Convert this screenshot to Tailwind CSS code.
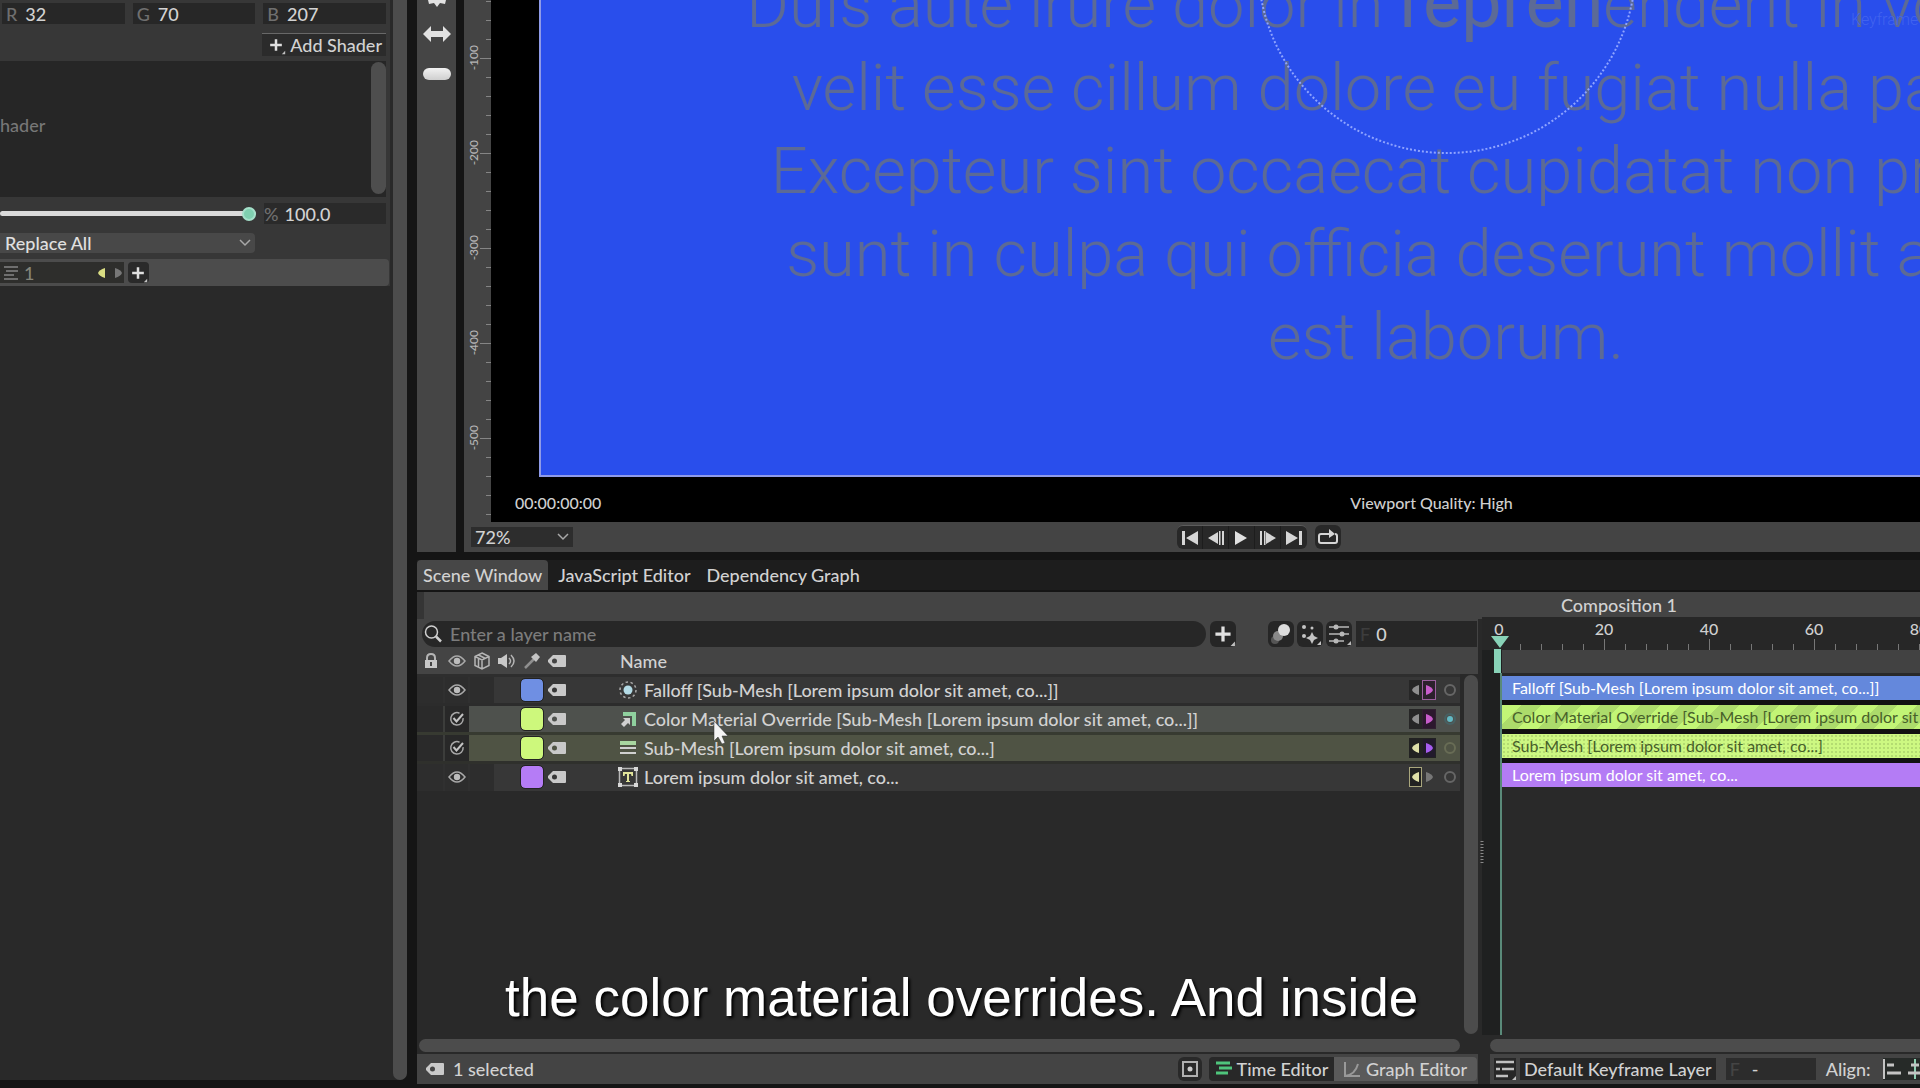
<!DOCTYPE html>
<html lang="en">
<head>
  <meta charset="UTF-8">
  <title>Scene Window - Composition 1</title>
  <script src="https://cdn.jsdelivr.net/npm/@tailwindcss/browser@4"></script>
</head>
<body class="h-screen flex overflow-hidden bg-[#151515] font-['Lato',sans-serif] font-medium text-lg leading-6 text-[#d2d2d2]">

  <!-- Shared icons -->
  <svg class="hidden">
    <symbol id="tag" viewBox="0 0 20 14"><path fill="#c9c9c9" fill-rule="evenodd" d="M6 1h12q1 0 1 1v10q0 1-1 1H6L1 8V6zM7.500 4.500a2.500 2.500 0 1 0 0 5a2.500 2.500 0 1 0 0-5z"/></symbol>
    <symbol id="eye" viewBox="0 0 18 14"><path fill="none" stroke="#a9a9a9" stroke-width="1.500" d="M1 7q8-10 16 0q-8 10-16 0z"/><circle cx="9" cy="7" r="3.200" fill="#bdbdbd"/></symbol>
    <symbol id="check" viewBox="0 0 16 16"><path fill="none" stroke="#a8a8a8" stroke-width="1.500" d="M10.500 2.200a6.200 6.200 0 1 0 3.600 5"/><path fill="none" stroke="#c4c4c4" stroke-width="2" d="M4.500 7l3 3.500L14 3"/></symbol>
    <symbol id="plus" viewBox="0 0 24 24"><path stroke="#e0e0e0" stroke-width="3" d="M12 5v14M5 12h14"/><path fill="#c0c0c0" d="M23 19v4h-4z"/></symbol>
    <symbol id="left" viewBox="0 0 8 10"><path fill="currentColor" d="M7 0v10Q1 8 0 5Q1 2 7 0z"/></symbol>
    <symbol id="right" viewBox="0 0 8 10"><path fill="currentColor" d="M1 0v10Q7 8 8 5Q7 2 1 0z"/></symbol>
    <symbol id="chevron" viewBox="0 0 12 8"><path fill="none" stroke="#a8a8a8" stroke-width="1.500" d="M1 1l5 5l5-5"/></symbol>
  </svg>

  <!-- Attribute panel -->
  <aside class="w-[407px] shrink-0 flex bg-[#292929] mb-2 rounded-br-lg">
    <div class="flex-1 mr-[3px]">
      <div class="bg-[#373737]">
        <div class="flex gap-2 pt-[3px] pr-1 pl-[2px]">
          <label class="flex-1 flex items-center gap-2 bg-[#272727] h-[21px] pl-1 text-[#6f6f6f]">R<input class="w-16 text-[#d2d2d2]" value="32"></label>
          <label class="flex-1 flex items-center gap-2 bg-[#272727] h-[21px] pl-1 text-[#6f6f6f]">G<input class="w-16 text-[#d2d2d2]" value="70"></label>
          <label class="flex-1 flex items-center gap-2 bg-[#272727] h-[21px] pl-1 text-[#6f6f6f]">B<input class="w-16 text-[#d2d2d2]" value="207"></label>
        </div>
        <div class="flex justify-end pt-[9px] pr-1 pb-[5px]">
          <button class="flex items-center gap-1 h-[23px] px-1 bg-[#2b2b2b] border-t border-[#686868]"><svg class="size-5"><use href="#plus"/></svg>Add Shader</button>
        </div>
        <div class="flex justify-between bg-[#262626] h-[136px] mr-1">
          <span class="pt-[52px] text-[#777]">hader</span>
          <div class="w-[15px] h-[132px] mt-px rounded-full bg-[#4e4e4e]"></div>
        </div>
        <div class="flex items-center gap-2 mt-[6px] pr-1">
          <input type="range" aria-label="Opacity" value="100" class="flex-1 min-w-0 h-[5px] rounded-full appearance-none bg-[#dadada] [&::-webkit-slider-thumb]:appearance-none [&::-webkit-slider-thumb]:size-[14px] [&::-webkit-slider-thumb]:rounded-full [&::-webkit-slider-thumb]:bg-[#7fd0b0] [&::-webkit-slider-thumb]:border-2 [&::-webkit-slider-thumb]:border-[#a5e0ca]">
          <label class="flex items-center gap-[6px] w-[122px] bg-[#2a2a2a] h-[21px] text-[#6f6f6f]">%<input class="w-20 text-[#d2d2d2]" value="100.0"></label>
        </div>
        <div class="relative w-[255px] h-5 mt-[9px]">
          <select aria-label="Blend" class="appearance-none block w-full h-5 leading-5 pl-[5px] bg-[#484848] rounded-r text-[#e0e0e0]"><option>Replace All</option></select>
          <svg class="absolute right-1 top-[6px] w-3 h-2"><use href="#chevron"/></svg>
        </div>
        <div class="flex items-center gap-1 h-[27px] mt-[6px] mr-px rounded-r bg-[#4c4c4c]">
          <div class="flex items-center w-[124px] h-[21px] pl-1 bg-[#2e2e2c] text-[#85857a]">
            <svg class="w-[14px] h-[14px] mr-[6px]" viewBox="0 0 14 14"><path stroke="#858585" stroke-width="1.500" d="M0 1h14M2 5h12M0 9h10M0 13h14"/></svg>
            1
            <svg class="w-2 h-[10px] ml-auto text-[#d9dd83]"><use href="#left"/></svg>
            <svg class="w-2 h-[10px] ml-2 mr-[2px] text-[#777]"><use href="#right"/></svg>
          </div>
          <button aria-label="Add" class="size-[21px] rounded bg-[#2a2a2a]"><svg class="size-5"><use href="#plus"/></svg></button>
        </div>
      </div>
    </div>
    <div class="w-[14px] bg-[#4c4c4c] rounded-b-lg"></div>
  </aside>

  <main class="flex-1 min-w-0 flex flex-col ml-[10px]">

    <div class="flex h-[552px] shrink-0">
      <!-- Tool strip -->
      <div class="w-[39px] shrink-0 mr-2 bg-[#454545] flex flex-col items-center">
        <svg class="w-5 h-2" viewBox="0 0 20 8"><path fill="#e2e2e2" d="M1 0h18l-1 4l-5-1l-3 4l-3-4l-5 1z"/></svg>
        <svg class="w-[30px] h-4 mt-[18px]" viewBox="0 0 30 16"><path fill="#e2e2e2" d="M1 8l8-8v5h12V0l8 8l-8 8v-5H9v5z"/></svg>
        <div class="w-7 h-3 mt-[26px] rounded-full bg-linear-to-b from-[#f2f2f2] to-[#cfcfcf]"></div>
      </div>

      <!-- Viewport -->
      <section class="flex-1 min-w-0 flex flex-col bg-[#444]">
        <div class="flex h-[522px]">
          <div class="relative w-[27px] shrink-0 pt-[10px] pl-[2px] overflow-hidden text-xs leading-4 text-[#b5b5b5]">
            <svg class="absolute inset-0 w-full h-full">
              <defs>
                <pattern id="minor" y="1" width="27" height="19" patternUnits="userSpaceOnUse"><path stroke="#858585" d="M22 .5h5"/></pattern>
                <pattern id="major" y="58" width="27" height="95" patternUnits="userSpaceOnUse"><path stroke="#858585" d="M16 .5h11"/></pattern>
              </defs>
              <rect width="27" height="522" fill="url(#minor)"/>
              <rect width="27" height="522" fill="url(#major)"/>
            </svg>
            <div class="h-[95px] flex items-center"><span class="[writing-mode:vertical-rl] rotate-180">-100</span></div>
            <div class="h-[95px] flex items-center"><span class="[writing-mode:vertical-rl] rotate-180">-200</span></div>
            <div class="h-[95px] flex items-center"><span class="[writing-mode:vertical-rl] rotate-180">-300</span></div>
            <div class="h-[95px] flex items-center"><span class="[writing-mode:vertical-rl] rotate-180">-400</span></div>
            <div class="h-[95px] flex items-center"><span class="[writing-mode:vertical-rl] rotate-180">-500</span></div>
          </div>
          <div class="flex-1 min-w-0 bg-black text-base text-[#cfcfcf] overflow-hidden">
            <div class="relative ml-12 h-[477px] w-[1812px] border-l-2 border-b-2 border-[#8f9be8] bg-[#294eec] flex flex-col justify-end pb-[96px] text-center whitespace-nowrap font-['Roboto',sans-serif] font-light text-[65px] leading-[83px] text-[#5c6a96]">
              <p>Duis aute irure dolor in <span class="font-normal text-[72px] leading-none">repreh</span>enderit in voluptate</p>
              <p>velit esse cillum dolore eu fugiat nulla pariatur.</p>
              <p>Excepteur sint occaecat cupidatat non proident,</p>
              <p>sunt in culpa qui officia deserunt mollit anim id</p>
              <p>est laborum.</p>
              <svg class="absolute left-0 top-0 w-full h-full"><circle cx="906" cy="-36" r="189" fill="none" stroke="#8fa4ff" stroke-width="2" stroke-dasharray="2 2"/></svg>
              <span class="absolute left-[1310px] top-2 text-base leading-6 text-[#4163ee]">Keyframe</span>
            </div>
            <div class="grid grid-cols-[auto_1fr] pl-6 pt-[14px]">
              <span>00:00:00:00</span>
              <span class="pl-[749px]">Viewport Quality: High</span>
            </div>
          </div>
        </div>
        <div class="flex-1 flex items-center pl-[7px]">
          <div class="relative w-[102px]">
            <select aria-label="Zoom" class="appearance-none block w-full h-5 leading-5 pl-1 bg-[#2d2d2d]"><option>72%</option></select>
            <svg class="absolute right-1 top-[6px] w-3 h-2"><use href="#chevron"/></svg>
          </div>
          <div class="flex ml-[604px] h-6 rounded-md bg-[#282828] divide-x divide-[#1d1d1d] border-t border-[#5c5c5c]">
            <button aria-label="First frame" class="w-[26px] pl-1"><svg class="w-[18px] h-4" viewBox="0 0 18 16"><path fill="#d6d6d6" d="M1 1h3v14H1zM17 1v14L5 8z"/></svg></button>
            <button aria-label="Previous frame" class="w-[26px] pl-1"><svg class="w-[18px] h-4" viewBox="0 0 18 16"><path fill="#d6d6d6" d="M11 2v12L1 8zM12 1h1.500v14H12zM15 1h2v14h-2z"/></svg></button>
            <button aria-label="Play" class="w-[26px] pl-1"><svg class="w-[18px] h-4" viewBox="0 0 18 16"><path fill="#e0e0e0" d="M2 1v14l12-7z"/></svg></button>
            <button aria-label="Next frame" class="w-[26px] pl-1"><svg class="w-[18px] h-4" viewBox="0 0 18 16"><path fill="#d6d6d6" d="M7 2v12l10-6zM1 1h2v14H1zM5 1h1.500v14H5z"/></svg></button>
            <button aria-label="Last frame" class="w-[26px] pl-1"><svg class="w-[18px] h-4" viewBox="0 0 18 16"><path fill="#d6d6d6" d="M1 1v14l12-7zM14 1h3v14h-3z"/></svg></button>
          </div>
          <button aria-label="Loop" class="ml-2 w-[26px] h-6 pl-[3px] rounded-md bg-[#282828]"><svg class="w-5 h-4" viewBox="0 0 20 16"><path fill="none" stroke="#d6d6d6" stroke-width="2" d="M7 5H3q-2 0-2 2v5q0 2 2 2h14q2 0 2-2V7q0-2-2-2M6 5h6"/><path fill="#d6d6d6" d="M11 0l6 5l-6 4z"/></svg></button>
        </div>
      </section>
    </div>

    <!-- Tabs -->
    <nav class="flex h-[30px] mt-2 mb-[2px] bg-[#1d1d1d] shrink-0">
      <button class="px-[6px] bg-[#474747] rounded-t-sm">Scene Window</button>
      <button class="px-[10px]">JavaScript Editor</button>
      <button class="px-[6px]">Dependency Graph</button>
    </nav>

    <div class="flex-1 flex min-h-0 mb-1">

      <!-- Layer list -->
      <section class="w-[1065px] shrink-0 flex flex-col bg-[#292929]">
        <div class="h-[27px] bg-[#444] border-l-[7px] border-[#353535]"></div>
        <div class="flex items-center h-[30px] bg-[#444] pl-[5px] mr-1">
          <label class="flex items-center gap-2 w-[784px] h-[26px] mr-1 pl-[2px] rounded-full bg-[#272727]">
            <svg class="size-[18px]" viewBox="0 0 18 18"><circle cx="7.500" cy="7" r="6" fill="none" stroke="#cfcfcf" stroke-width="1.500"/><path stroke="#cfcfcf" stroke-width="2.500" d="M12 11.500l5 5"/></svg>
            <input aria-label="Layer name" placeholder="Enter a layer name" class="flex-1 placeholder:text-[#7c7c7c]">
          </label>
          <button aria-label="New layer" class="size-[26px] rounded-md bg-[#262626]"><svg class="size-[26px]"><use href="#plus"/></svg></button>
          <button aria-label="Motion blur" class="ml-8 size-[26px] rounded-md bg-[#262626]"><svg class="size-[26px]" viewBox="0 0 26 26"><circle cx="7" cy="19" r="4" fill="#555"/><circle cx="10" cy="15" r="5" fill="#888"/><circle cx="16" cy="9" r="6" fill="#dcdcdc"/></svg></button>
          <button aria-label="Effects" class="ml-[3px] size-[26px] rounded-md bg-[#262626]"><svg class="size-[26px]" viewBox="0 0 26 26"><g fill="#c4c4c4"><circle cx="7" cy="6" r="2"/><circle cx="15" cy="7" r="1.500"/><circle cx="7" cy="15" r="2"/><path d="M15 11l2 4l4 2l-4 2l-2 4l-2-4l-4-2l4-2zM24 20v4h-4z"/></g></svg></button>
          <button aria-label="Filters" class="ml-[3px] size-[26px] rounded-md bg-[#262626]"><svg class="size-[26px]" viewBox="0 0 26 26"><path stroke="#b8b8b8" stroke-width="1.500" d="M3 6h20M3 13h20M3 20h15"/><g fill="#b8b8b8"><circle cx="10" cy="6" r="2.500"/><circle cx="16" cy="13" r="2.500"/><circle cx="10" cy="20" r="2.500"/><path d="M25 20v4h-4z"/></g></svg></button>
          <label class="flex items-center gap-[6px] flex-1 h-[26px] ml-1 mr-px pl-1 bg-[#272727] text-[#3d3d3d]">F<input class="w-20 text-[#d2d2d2]" value="0"></label>
        </div>

        <div class="flex-1 flex min-h-0 bg-[#292929]">
          <div class="flex-1 min-w-0">
            <table class="w-full table-fixed border-collapse">
              <colgroup><col class="w-[27px]"><col class="w-[25px]"><col class="w-[25px]"><col class="w-[25px]"><col class="w-[25px]"><col class="w-[25px]"><col class="w-[49px]"><col><col class="w-[51px]"></colgroup>
              <thead>
                <tr class="h-[26px] bg-[#444] text-left border-b-[3px] border-[#2e2e2e]">
                  <th aria-label="Lock"><svg class="w-[14px] h-4 mx-auto" viewBox="0 0 14 16"><path fill="none" stroke="#b5b5b5" stroke-width="2" d="M3 8V5q0-4 4-4t4 4v3"/><path fill="#c8c8c8" fill-rule="evenodd" d="M1 7h12v8H1zM6 9h2v4H6z"/></svg></th>
                  <th aria-label="Visible"><svg class="w-[18px] h-[14px] mx-auto"><use href="#eye"/></svg></th>
                  <th aria-label="3D"><svg class="size-[18px] mx-auto" viewBox="0 0 18 18"><path fill="none" stroke="#b5b5b5" stroke-width="1.500" d="M9 1l7 3.500v9L9 17l-7-3.500v-9zM2 4.500L9 8l7-3.500M9 8v9M5.500 3l7 3.500M5.500 6v9"/></svg></th>
                  <th aria-label="Audio"><svg class="w-[18px] h-4 mx-auto" viewBox="0 0 18 16"><path fill="#c8c8c8" d="M0 5h3l6-4v14l-6-4H0z"/><path fill="none" stroke="#b5b5b5" stroke-width="1.500" d="M11 5q3 3 0 6M13 2q6 6 0 12"/></svg></th>
                  <th aria-label="Colour"><svg class="size-4 mx-auto" viewBox="0 0 16 16"><path stroke="#8f8f8f" stroke-width="2.500" d="M1 15l9-9"/><path fill="#c4c4c4" d="M7 4l5-4l4 4l-4 5z"/></svg></th>
                  <th aria-label="Tag"><svg class="w-5 h-[14px] mx-auto"><use href="#tag"/></svg></th>
                  <th></th>
                  <th class="pl-[2px] font-medium leading-6">Name</th>
                  <th></th>
                </tr>
              </thead>
              <tbody>
                <tr class="h-[29px] bg-[#373737] border-b-[3px] border-[#2c2c2c]">
                  <td class="bg-[#2d2d2d] border-r-2 border-[#303030]"></td>
                  <td class="bg-[#2d2d2d] border-r-2 border-[#303030]"><svg class="w-[18px] h-[14px] mx-auto"><use href="#eye"/></svg></td>
                  <td class="bg-[#2d2d2d]"></td>
                  <td></td>
                  <td><div class="size-[22px] mx-auto rounded-sm bg-[#6f8fe3] outline outline-[#222]"></div></td>
                  <td><svg class="w-5 h-[14px] mx-auto"><use href="#tag"/></svg></td>
                  <td></td>
                  <td><div class="flex items-center gap-[6px] whitespace-nowrap"><svg class="size-5" viewBox="0 0 20 20"><circle cx="10" cy="10" r="8" fill="none" stroke="#aaa" stroke-width="1.500" stroke-dasharray="2.500 2.500"/><circle cx="10" cy="10" r="4.500" fill="#b4dbe6"/></svg>Falloff [Sub-Mesh [Lorem ipsum dolor sit amet, co...]]</div></td>
                  <td><div class="flex items-center"><span class="flex w-[13px] h-5 items-center justify-center bg-[#262626] text-[#8f8f8f]"><svg class="w-2 h-[10px]"><use href="#left"/></svg></span><span class="flex w-[14px] h-5 items-center justify-center border border-[#9a5f9d] bg-[#2c202c] text-[#c75ccb]"><svg class="w-2 h-[10px]"><use href="#right"/></svg></span><span class="size-3 ml-2 rounded-full border-2 border-[#666]"></span></div></td>
                </tr>
                <tr class="h-[29px] bg-[#4e514d] border-b-[3px] border-[#373a31]">
                  <td class="bg-[#2a2a2a] border-r-2 border-[#3c3d3b]"></td>
                  <td class="bg-[#282828]"><svg class="size-4 mx-auto"><use href="#check"/></svg></td>
                  <td></td>
                  <td></td>
                  <td><div class="size-[22px] mx-auto rounded-sm bg-[#cdf87c] outline outline-[#222]"></div></td>
                  <td><svg class="w-5 h-[14px] mx-auto"><use href="#tag"/></svg></td>
                  <td></td>
                  <td><div class="flex items-center gap-[6px] whitespace-nowrap"><svg class="size-5" viewBox="0 0 20 20"><path fill="#8fd09e" d="M5 3h13v14h-4V7H5z"/><path fill="#d0d0d0" d="M5 9h7v7l-2-2l-4 4l-3-3l4-4z"/></svg>Color Material Override [Sub-Mesh [Lorem ipsum dolor sit amet, co...]]</div></td>
                  <td><div class="flex items-center"><span class="flex w-[13px] h-5 items-center justify-center bg-[#262626] text-[#8f8f8f]"><svg class="w-2 h-[10px]"><use href="#left"/></svg></span><span class="flex w-[14px] h-5 items-center justify-center border border-[#302030] bg-[#2c182e] text-[#c75ccb]"><svg class="w-2 h-[10px]"><use href="#right"/></svg></span><span class="flex items-center justify-center size-3 ml-2 rounded-full border-2 border-[#476062]"><span class="size-[6px] rounded-full bg-[#62b9c4]"></span></span></div></td>
                </tr>
                <tr class="h-[29px] bg-[#4f5344] border-b-[3px] border-[#2f302c]">
                  <td class="bg-[#2a2a2a] border-r-2 border-[#3c3d3b]"></td>
                  <td class="bg-[#282828]"><svg class="size-4 mx-auto"><use href="#check"/></svg></td>
                  <td></td>
                  <td></td>
                  <td><div class="size-[22px] mx-auto rounded-sm bg-[#cdf87c] outline outline-[#222]"></div></td>
                  <td><svg class="w-5 h-[14px] mx-auto"><use href="#tag"/></svg></td>
                  <td></td>
                  <td><div class="flex items-center gap-[6px] whitespace-nowrap"><svg class="size-5" viewBox="0 0 20 20"><path fill="#a8d6a0" d="M2 3h16v4H2z"/><path fill="#d0d0d0" d="M2 9h16v2H2zM2 14h16v2H2z"/></svg>Sub-Mesh [Lorem ipsum dolor sit amet, co...]</div></td>
                  <td><div class="flex items-center"><span class="flex w-[13px] h-5 items-center justify-center bg-[#222] text-[#dfe0a8]"><svg class="w-2 h-[10px]"><use href="#left"/></svg></span><span class="flex w-[14px] h-5 items-center justify-center border border-[#222] bg-[#221a2c] text-[#a75df0]"><svg class="w-2 h-[10px]"><use href="#right"/></svg></span><span class="size-3 ml-2 rounded-full border-2 border-[#686c55]"></span></div></td>
                </tr>
                <tr class="h-[29px] bg-[#373737]">
                  <td class="bg-[#2d2d2d] border-r-2 border-[#303030]"></td>
                  <td class="bg-[#2d2d2d] border-r-2 border-[#303030]"><svg class="w-[18px] h-[14px] mx-auto"><use href="#eye"/></svg></td>
                  <td class="bg-[#2d2d2d]"></td>
                  <td></td>
                  <td><div class="size-[22px] mx-auto rounded-sm bg-[#b57cf6] outline outline-[#222]"></div></td>
                  <td><svg class="w-5 h-[14px] mx-auto"><use href="#tag"/></svg></td>
                  <td></td>
                  <td><div class="flex items-center gap-[6px] whitespace-nowrap"><svg class="size-5" viewBox="0 0 20 20"><path fill="none" stroke="#b8b8b8" stroke-width="1.500" d="M1.500 1.500h17v17h-17z"/><path fill="#d8d8d8" d="M0 0h4v4H0zM16 0h4v4h-4zM0 16h4v4H0zM16 16h4v4h-4z"/><path fill="#e0e39a" d="M5 5h10v4h-1.500l-.5-2h-2v7h1v1H8v-1h1V7H7l-.500 2H5z"/></svg>Lorem ipsum dolor sit amet, co...</div></td>
                  <td><div class="flex items-center"><span class="flex w-[13px] h-5 items-center justify-center border border-[#a9a67c] bg-[#222] text-[#dfe0a8]"><svg class="w-2 h-[10px]"><use href="#left"/></svg></span><span class="flex w-[14px] h-5 items-center justify-center text-[#777]"><svg class="w-2 h-[10px]"><use href="#right"/></svg></span><span class="size-3 ml-2 rounded-full border-2 border-[#666]"></span></div></td>
                </tr>
              </tbody>
            </table>
          </div>
          <div class="w-[22px] pr-1 flex flex-col">
            <div class="h-[25px] bg-[#444]"></div>
            <div class="flex-1 w-[14px] ml-1 my-px rounded-full bg-[#4c4c4c]"></div>
          </div>
        </div>

        <div class="h-[13px] mt-1 ml-[2px] mr-[22px] rounded-full bg-[#4c4c4c]"></div>
        <div class="flex items-center h-[30px] mt-[2px] mr-1 pl-2 pr-px bg-[#444]">
          <svg class="w-5 h-[14px] mr-2"><use href="#tag"/></svg>
          <span>1 selected</span>
          <button aria-label="Isolate" class="ml-auto mr-[7px] size-6 rounded-md bg-[#292929]"><svg class="size-6" viewBox="0 0 24 24"><path fill="none" stroke="#b0b0b0" stroke-width="2" d="M5 5h14v14H5z"/><circle cx="12" cy="12" r="2.500" fill="#ccc"/></svg></button>
          <button class="flex items-center justify-center gap-1 w-[125px] h-6 rounded-l bg-[#282828]"><svg class="w-[18px] h-4" viewBox="0 0 18 16"><path stroke="#4fc57c" stroke-width="3" d="M1 2h14M4 7h13M1 12h12"/></svg>Time Editor</button>
          <button class="flex items-center justify-center gap-[6px] w-[143px] h-6 rounded-r bg-[#5a5a5a]"><svg class="size-4" viewBox="0 0 16 16"><path fill="none" stroke="#999" stroke-width="2" d="M1 1v14h15M1 15q10-1 13-12"/></svg>Graph Editor</button>
        </div>
      </section>

      <!-- Timeline -->
      <section class="flex-1 min-w-0 flex flex-col bg-[#292929]">
        <div class="h-[25px] pl-[79px] leading-[26px] bg-[#444]">Composition 1</div>
        <div class="relative flex-1 flex flex-col pl-5 bg-[#1f2020]">
          <div class="h-[33px] -ml-5 pl-[17px] bg-[#272727]">
            <svg class="w-full h-[33px] overflow-visible text-base" fill="#cfcfcf" text-anchor="middle">
              <defs>
                <pattern id="frames" x="0" width="21" height="8" y="25" patternUnits="userSpaceOnUse"><path stroke="#777" d="M.5 2v6"/></pattern>
              </defs>
              <rect x="10" y="25" width="420" height="8" fill="url(#frames)"/>
              <path stroke="#777" d="M105.500 22v11M210.500 22v11M315.500 22v11"/>
              <text x="0" y="18">0</text>
              <text x="105" y="18">20</text>
              <text x="210" y="18">40</text>
              <text x="315" y="18">60</text>
              <text x="420" y="18">80</text>
            </svg>
          </div>
          <div class="h-[23px] bg-[#424242]"></div>
          <div class="flex-1 pt-[3px] bg-[#292929] text-base font-normal leading-6 whitespace-nowrap">
            <div class="bg-[#121212] flex flex-col gap-[5px] overflow-hidden">
              <div class="h-6 pl-[10px] bg-[#6488dc] text-white">Falloff [Sub-Mesh [Lorem ipsum dolor sit amet, co...]]</div>
              <div class="h-6 pl-[10px] bg-[repeating-linear-gradient(135deg,#c2f576_0_14px,#acdb6b_14px_28px)] text-[#47602a]">Color Material Override [Sub-Mesh [Lorem ipsum dolor sit amet, co...]]</div>
              <div class="h-6 pl-[10px] bg-[#cdf882] bg-[radial-gradient(#b4dc72_1px,transparent_1px)] bg-size-[4px_4px] text-[#47602a]">Sub-Mesh [Lorem ipsum dolor sit amet, co...]</div>
              <div class="h-6 pl-[10px] bg-[#b47cf5] text-white">Lorem ipsum dolor sit amet, co...</div>
            </div>
          </div>
          <svg class="absolute left-2 top-[19px] w-5 h-full" aria-hidden="true"><path fill="#88d2b7" d="M1 0h18l-9 12zM4 13h7v24H4z"/><path fill="#5a8a79" d="M10 37h2v362h-2z"/></svg>
          <svg class="absolute -left-1 top-[224px] w-2 h-6" aria-hidden="true"><path stroke="#888" stroke-width="3" stroke-dasharray="1 2" d="M4 0v24"/></svg>
        </div>
        <div class="h-[13px] mt-1 ml-2 rounded-l-full bg-[#4c4c4c]"></div>
        <div class="flex items-center h-[30px] mt-[2px] ml-2 pl-1 bg-[#444] whitespace-nowrap overflow-hidden">
          <button aria-label="Keyframe layers" class="size-[22px] shrink-0 mr-1 bg-[#272727]"><svg class="size-[22px]" viewBox="0 0 22 22"><path stroke="#c0c0c0" stroke-width="2.500" d="M2 4h18M2 11h4M8 11h12M2 18h12"/><path fill="#c0c0c0" d="M22 18v4h-4z"/></svg></button>
          <button class="h-[22px] shrink-0 leading-[22px] px-1 bg-[#262626]">Default Keyframe Layer</button>
          <label class="flex items-center gap-3 w-[90px] shrink-0 h-[22px] ml-[10px] mr-[10px] pl-1 bg-[#2c2c2c] text-[#444]">F<input class="w-12 text-[#d2d2d2]" value="-"></label>
          <span class="mr-3">Align:</span>
          <button aria-label="Align left" class="w-6 h-[22px] shrink-0 bg-[#262a28]"><svg class="w-6 h-[22px]" viewBox="0 0 24 22"><path stroke="#c4c4c4" stroke-width="2" d="M1 1v20"/><path stroke="#c4c4c4" stroke-width="3" d="M4 7h7M4 15h14"/></svg></button>
          <button aria-label="Align center" class="w-6 h-[22px] shrink-0 bg-[#262a28]"><svg class="w-6 h-[22px]" viewBox="0 0 24 22"><path stroke="#8fd0b4" stroke-width="2" d="M8 1v20"/><path stroke="#c4c4c4" stroke-width="3" d="M4 7h8M1 15h14"/></svg></button>
        </div>
      </section>
    </div>
  </main>

  <!-- Caption and pointer over the application -->
  <p class="absolute left-[505px] top-[968px] font-['Liberation_Sans',sans-serif] font-normal text-[53px] leading-[60px] text-white whitespace-nowrap text-shadow-[2px_2px_3px_#000]">the color material overrides. And inside</p>
  <svg class="absolute left-[713px] top-[721px] w-4 h-6" viewBox="0 0 16 24"><path fill="#f4f4f4" stroke="#333" stroke-width=".5" d="M1 0v20l4-4l4 7l3-1l-3-7h6z"/></svg>

</body>
</html>
